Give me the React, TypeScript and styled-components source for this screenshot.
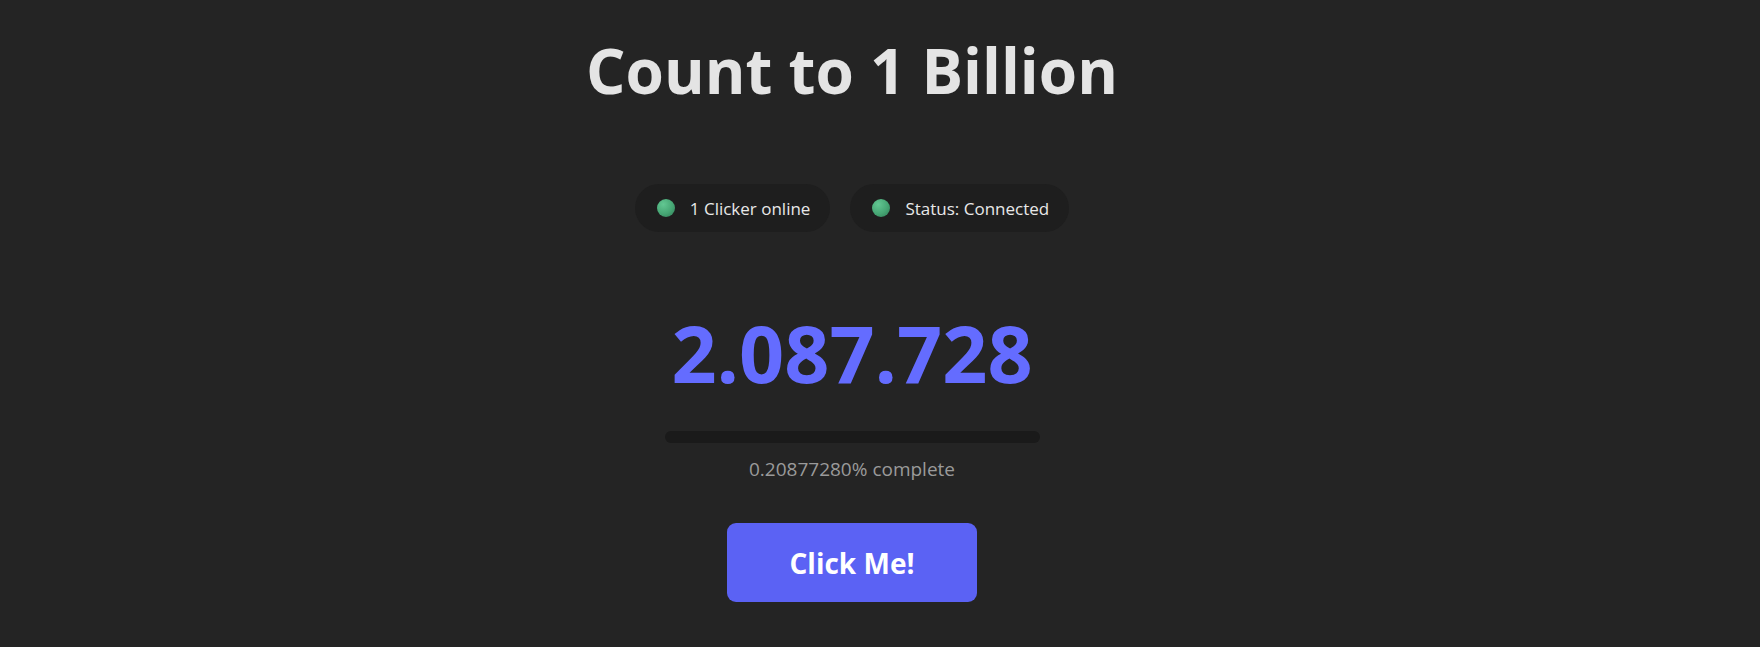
import React from "react";
import styled, { createGlobalStyle } from "styled-components";

const Global = createGlobalStyle`
  html, body {
    margin: 0;
    padding: 0;
    background: #242424;
  }
  body {
    font-family: "Open Sans", "Noto Sans", sans-serif;
    color: rgba(255, 255, 255, 0.87);
    -webkit-font-smoothing: antialiased;
  }
`;

const Page = styled.main`
  box-sizing: border-box;
  width: 100%;
  min-height: 647px;
  padding: 39px 56px 0 0;
  display: flex;
  flex-direction: column;
  align-items: center;
`;

const Title = styled.h1`
  margin: 0;
  font-size: 62px;
  line-height: 1;
  font-weight: 700;
  color: #e4e4e4;
`;

const StatusRow = styled.div`
  display: flex;
  gap: 20px;
  margin-top: 83px;
`;

const Pill = styled.div`
  display: flex;
  align-items: center;
  gap: 15px;
  height: 48px;
  padding: 0 20px 0 22px;
  border-radius: 24px;
  background: #1e1e1e;
  font-size: 17px;
  color: #e8e8e8;
`;

const Dot = styled.span`
  width: 18px;
  height: 18px;
  border-radius: 50%;
  background: radial-gradient(circle at 35% 30%, #62c792 0%, #46a674 55%, #2f7a55 100%);
  flex-shrink: 0;
`;

const Counter = styled.div`
  margin-top: 81px;
  font-size: 79px;
  line-height: 1;
  font-weight: 700;
  color: #646cff;
`;

const Track = styled.div`
  margin-top: 39px;
  width: 375px;
  height: 12px;
  border-radius: 6px;
  background: #1a1a1a;
`;

const Percent = styled.div`
  margin-top: 17px;
  font-size: 19px;
  line-height: 1;
  color: #9a9a9a;
`;

const ClickButton = styled.button`
  margin-top: 44px;
  width: 250px;
  height: 79px;
  border: none;
  border-radius: 9px;
  background: #5b62f4;
  color: #ffffff;
  font-family: inherit;
  font-size: 28px;
  font-weight: 700;
  cursor: pointer;
`;

export default function App() {
  const count = 2087728;
  const pct = (count / 1e9) * 100;
  return (
    <>
      <Global />
      <Page>
        <Title>Count to 1 Billion</Title>
        <StatusRow>
          <Pill>
            <Dot />
            1 Clicker online
          </Pill>
          <Pill>
            <Dot />
            Status: Connected
          </Pill>
        </StatusRow>
        <Counter>2.087.728</Counter>
        <Track />
        <Percent>{pct.toFixed(8)}% complete</Percent>
        <ClickButton>Click Me!</ClickButton>
      </Page>
    </>
  );
}
